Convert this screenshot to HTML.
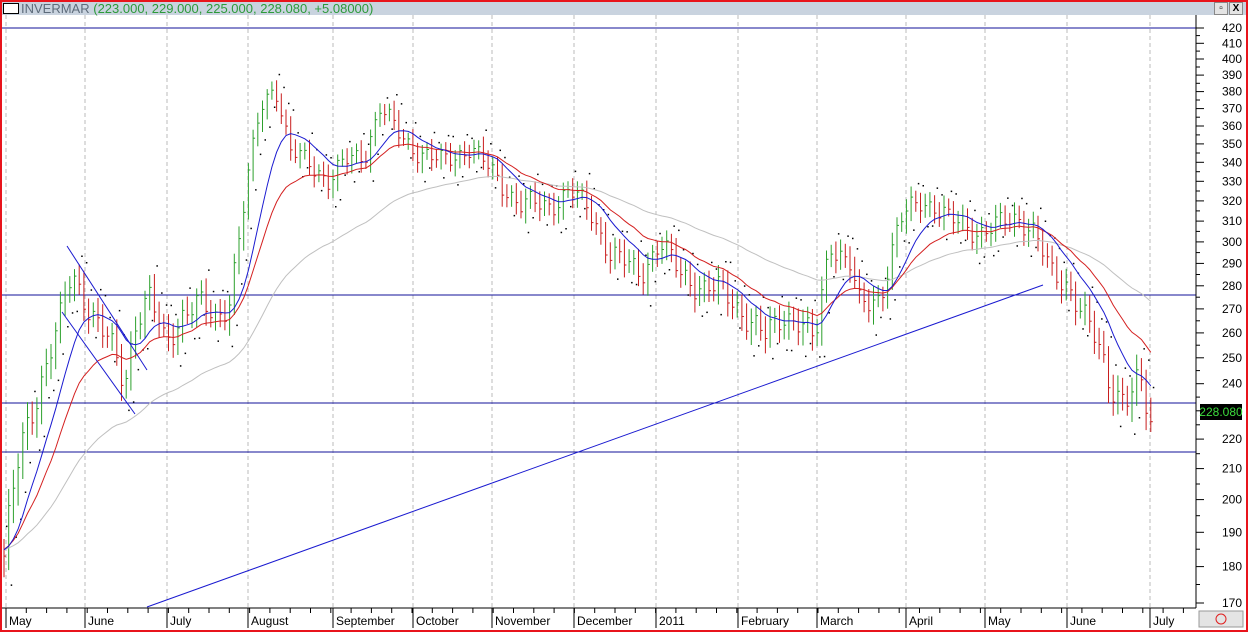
<!DOCTYPE html>
<html><head><meta charset="utf-8"><style>
html,body{margin:0;padding:0;width:1248px;height:632px;overflow:hidden;background:#fff;font-family:"Liberation Sans",sans-serif}
#wrap{position:absolute;left:0;top:0;width:1244px;height:628px;border:2px solid #e8141c;background:#fff}
#title{position:absolute;left:0;top:0;width:1244px;height:13px;background:#c9d3df;font-size:13px;line-height:13px;white-space:nowrap}
#title .box{position:absolute;left:1px;top:1px;width:14px;height:9px;border:1px solid #000;background:#fff}
#title .t{position:absolute;left:19px;top:0;color:#5d6b7a}
#title .t span{color:#2c9a3a}
.btn{position:absolute;top:0;width:12px;height:11px;border:1px solid #888;background:#e4e4e4;font-size:10px;line-height:11px;text-align:center}
svg{position:absolute;left:0;top:0}
</style></head><body>
<div id="wrap">
<div id="title"><div class="box"></div><div class="t">INVERMAR <span>(223.000, 229.000, 225.000, 228.080, +5.08000)</span></div>
<div class="btn" style="left:1212px">&#9643;</div><div class="btn" style="left:1227px;font-weight:bold">X</div></div>
</div>
<svg id="s" width="1248" height="632" xmlns="http://www.w3.org/2000/svg" font-family="Liberation Sans, sans-serif"></svg>
<script>
var s=document.getElementById('s'),h='';
function Y(p){return 28+635.7*(Math.log(420)-Math.log(p));}
var months=[[6,'May'],[85,'June'],[167,'July'],[248,'August'],[333,'September'],[413,'October'],[492,'November'],[574,'December'],[656,'2011'],[738,'February'],[817,'March'],[906,'April'],[985,'May'],[1067,'June'],[1150,'July']];
months.forEach(function(m){h+='<line x1="'+m[0]+'" y1="15" x2="'+m[0]+'" y2="608" stroke="#bbb" stroke-dasharray="4,3"/>';h+='<line x1="'+m[0]+'" y1="608" x2="'+m[0]+'" y2="628" stroke="#000"/><text x="'+(m[0]+3)+'" y="625" font-size="12">'+m[1]+'</text>';});
for(var x=6;x<1195;x+=20.3){h+='<line x1="'+x.toFixed(1)+'" y1="608" x2="'+x.toFixed(1)+'" y2="613" stroke="#000"/>';}
[28,295,403,452].forEach(function(y){h+='<line x1="2" y1="'+y+'" x2="1196" y2="'+y+'" stroke="#10109a"/>';});
var kp=[[5,185],[20,215],[40,240],[60,265],[72,285],[90,270],[110,255],[125,240],[135,265],[150,275],[165,255],[185,270],[200,272],[215,265],[230,275],[245,320],[260,370],[275,385],[290,345],[310,340],[330,330],[345,340],[365,345],[380,370],[400,355],[420,345],[440,340],[470,348],[500,330],[520,318],[550,318],[570,325],[590,315],[610,295],[640,285],[660,300],[680,285],[700,280],[720,278],[745,268],[765,258],[785,268],[800,265],[815,255],[830,300],[850,290],[860,270],[880,275],[900,310],[920,320],[935,318],[950,310],[980,305],[1000,308],[1020,312],[1035,305],[1050,285],[1070,280],[1090,262],[1110,240],[1125,235],[1140,240],[1150,225]];
function P(x){for(var i=0;i<kp.length-1;i++){if(x<=kp[i+1][0]){var a=kp[i],b=kp[i+1],t=(x-a[0])/(b[0]-a[0]);return a[1]+(b[1]-a[1])*t;}}return 225;}
var prev=185,e1=185,f1=185,e2=185,e3=185,b1='',b2='',b3='',i=0;
for(var x=4;x<=1152;x+=4.7,i++){
 var c=P(x)+4*Math.sin(i*1.7)+3*Math.sin(i*0.63);
 var hi=Math.max(c,prev)+3+3*Math.abs(Math.sin(i*2.3)),lo=Math.min(c,prev)-3-3*Math.abs(Math.cos(i*1.9));
 var col=c>=prev?'#2ca02c':'#c81e1e';
 var xx=x.toFixed(1);
 h+='<line x1="'+xx+'" y1="'+Y(hi).toFixed(1)+'" x2="'+xx+'" y2="'+Y(lo).toFixed(1)+'" stroke="'+col+'" stroke-width="1"/>';
 h+='<line x1="'+xx+'" y1="'+Y(c).toFixed(1)+'" x2="'+(x+2).toFixed(1)+'" y2="'+Y(c).toFixed(1)+'" stroke="'+col+'"/>';
 var sar=c>=prev?lo-4:hi+4;
 h+='<rect x="'+(x+2)+'" y="'+Y(sar).toFixed(1)+'" width="1.5" height="1.5" fill="#000"/>';
 e1+=(c-e1)*0.25; f1+=(e1-f1)*0.35; e2+=(c-e2)*0.09; e3+=(c-e3)*0.035;
 b1+=(b1?'L':'M')+xx+','+Y(f1).toFixed(1);b2+=(b2?'L':'M')+xx+','+Y(e2).toFixed(1);b3+=(b3?'L':'M')+xx+','+Y(e3).toFixed(1);
 prev=c;}
h+='<path d="'+b3+'" fill="none" stroke="#c0c0c0"/><path d="'+b2+'" fill="none" stroke="#d42020"/><path d="'+b1+'" fill="none" stroke="#1a1ad0"/>';
h+='<line x1="67" y1="246" x2="147" y2="370" stroke="#1a1ad0"/><line x1="62" y1="312" x2="135" y2="414" stroke="#1a1ad0"/><line x1="147" y1="607" x2="1043" y2="285" stroke="#1a1ad0"/>';
h+='<line x1="1196" y1="15" x2="1196" y2="608" stroke="#000"/><line x1="2" y1="608" x2="1196" y2="608" stroke="#000"/>';
for(var p=170;p<=420;p+=10){var y=Y(p);h+='<line x1="1196" y1="'+y.toFixed(1)+'" x2="1204" y2="'+y.toFixed(1)+'" stroke="#000"/><text x="1242" y="'+(y+4).toFixed(1)+'" font-size="12" text-anchor="end">'+p+'</text>';var y2=Y(p+5);if(p<420)h+='<line x1="1196" y1="'+y2.toFixed(1)+'" x2="1200" y2="'+y2.toFixed(1)+'" stroke="#000"/>';}
h+='<rect x="1200" y="404" width="42" height="16" fill="#000"/><text x="1221" y="416" font-size="12" fill="#3ddc3d" text-anchor="middle">228.080</text>';
h+='<rect x="1199" y="611" width="44" height="16" fill="#e4e4e4" stroke="#999"/><circle cx="1221" cy="619" r="5" fill="none" stroke="#e02020"/>';
s.innerHTML=h;
</script>
</body></html>
